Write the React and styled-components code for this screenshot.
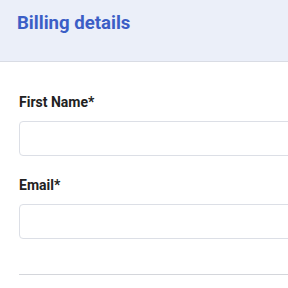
import React from 'react';
import styled, { createGlobalStyle } from 'styled-components';

const GlobalStyle = createGlobalStyle`
  body {
    margin: 0;
    background: #fff;
    font-family: Roboto, "Liberation Sans", Arial, sans-serif;
    overflow: hidden;
  }
`;

const Page = styled.div`
  width: 360px;
`;

const Header = styled.div`
  height: 61px;
  box-sizing: content-box;
  background-color: #ebeff9;
  border-bottom: 1px solid #d9dce4;
  padding: 0 17px;
`;

const Title = styled.h2`
  margin: 0;
  padding-top: 11px;
  font-size: 18.6px;
  line-height: 24px;
  font-weight: 700;
  color: #3b5ec6;
`;

const Form = styled.form`
  padding: 32px 0 0 19px;
`;

const Field = styled.div`
  display: flex;
  flex-direction: column;
  margin-bottom: ${(p) => p.gap}px;
`;

const Label = styled.label`
  font-size: 14px;
  line-height: 16px;
  font-weight: 700;
  color: #222;
  margin-bottom: 11px;
`;

const Input = styled.input`
  box-sizing: border-box;
  width: 100%;
  height: 35px;
  border: 1px solid #dcdfe6;
  border-radius: 4px;
  padding: 0 10px;
  font-family: inherit;
  font-size: 14px;
  outline: none;
`;

const Divider = styled.hr`
  margin: 0;
  border: none;
  border-top: 1px solid #d4d6db;
`;

const App = () => {
  return (
    <Page>
      <GlobalStyle />
      <Header>
        <Title>Billing details</Title>
      </Header>
      <Form>
        <Field gap={21}>
          <Label>First Name*</Label>
          <Input type="text" name="firstName" />
        </Field>
        <Field gap={35}>
          <Label>Email*</Label>
          <Input type="email" name="email" />
        </Field>
        <Divider />
      </Form>
    </Page>
  );
};

export default App;
